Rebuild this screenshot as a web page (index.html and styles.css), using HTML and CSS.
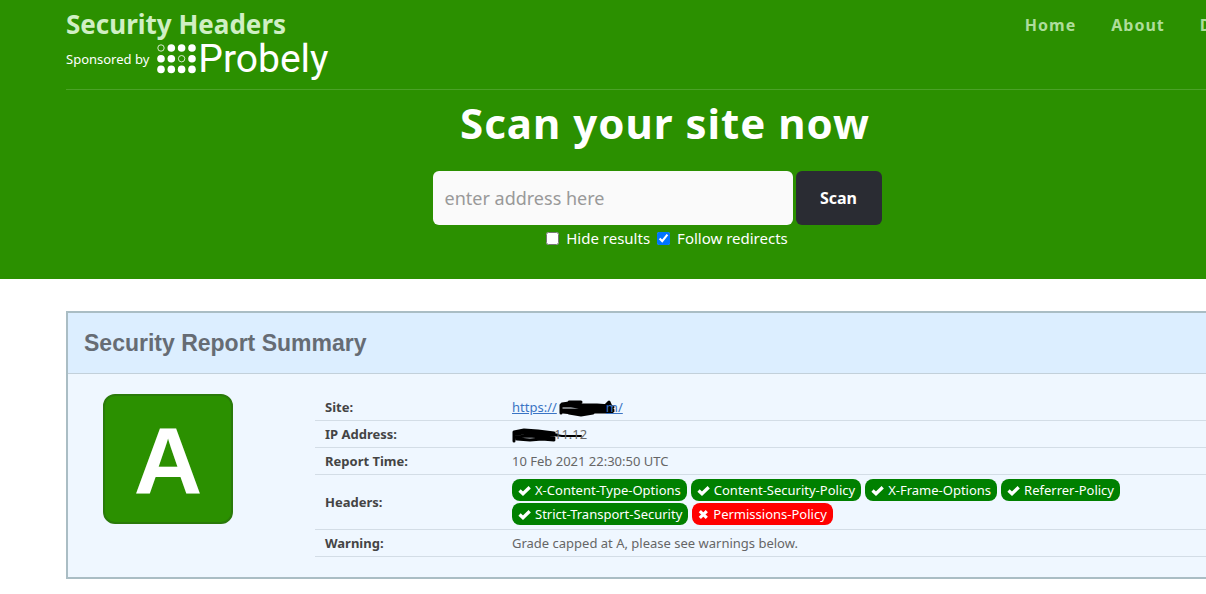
FILE: index.html
```html
<!DOCTYPE html>
<html lang="en">
<head>
<meta charset="UTF-8">
<meta name="viewport" content="width=device-width, initial-scale=1.0">
<title>Scan results - Security Headers</title>
<link rel="stylesheet" href="styles.css">
</head>
<body>
<svg class="sprite" aria-hidden="true">
<symbol id="icon-ok" viewBox="0 0 12 12"><path d="M1.4 6 4.6 9 10.8 3" fill="none" stroke="currentColor" stroke-width="3"/></symbol>
<symbol id="icon-remove" viewBox="0 0 12 12"><path d="M2 2.4 9.6 9.8M9.6 2.4 2 9.8" fill="none" stroke="currentColor" stroke-width="3.4"/></symbol>
</svg>

<header class="hero">
<div class="container">
<div class="topbar">
<div class="brand">
<a class="brand-name" href="#">Security Headers</a>
<div class="sponsor">
<span>Sponsored by</span>
<a class="probely" href="#">
<svg width="39" height="30" viewBox="0 0 39 30" fill="#fff" aria-hidden="true">
<circle cx="4" cy="4" r="3.2" fill="none" stroke="#fff" stroke-width="0.8"/>
<circle cx="14.3" cy="4" r="3.8"/><circle cx="24.6" cy="4" r="3.8"/><circle cx="35" cy="4" r="3.8"/>
<circle cx="4" cy="14.7" r="3.8"/><circle cx="14.3" cy="14.7" r="3.8"/>
<circle cx="24.6" cy="14.7" r="3.2" fill="none" stroke="#fff" stroke-width="0.8"/>
<circle cx="35" cy="14.7" r="3.8"/>
<circle cx="4" cy="25.4" r="3.8"/><circle cx="14.3" cy="25.4" r="3.8"/><circle cx="24.6" cy="25.4" r="3.8"/><circle cx="35" cy="25.4" r="3.8"/>
</svg>
<span>Probely</span>
</a>
</div>
</div>
<nav class="menu">
<a href="#">Home</a>
<a href="#">About</a>
<a href="#">Donate</a>
</nav>
</div>

<h1>Scan your site now</h1>
<form>
<div class="search">
<input type="text" class="address" placeholder="enter address here" aria-label="Address">
<button type="submit" class="scan-btn">Scan</button>
</div>
<div class="options">
<label><input type="checkbox" name="hide"> Hide results</label>
<label><input type="checkbox" name="followRedirects" checked> Follow redirects</label>
</div>
</form>
</div>
</header>

<main class="container">
<section class="report">
<h2>Security Report Summary</h2>
<div class="report-body">
<div class="grade">A</div>
<table class="summary">
<tr>
<th scope="row">Site:</th>
<td><a href="#">https://<svg class="scribble" width="49" height="16" viewBox="0 0 49 16" aria-hidden="true">
<path d="M5 4 12 3 22 5 40 5 54 6M5 6 14 6 30 8 56 7M4 10 14 10 26 10 44 10 56 10M6 12 16 13 26 12 44 12 55 12M12 2 24 2M12 13 24 15 36 13M4 5 4 13M48 6 52 2 56 11"/>
</svg>m/</a></td>
</tr>
<tr>
<th scope="row">IP Address:</th>
<td><svg class="scribble" width="42" height="16" viewBox="0 0 42 16" aria-hidden="true">
<path d="M2 14 2 5 12 3 26 4 42 6M2 7 14 6 30 7 45 8M3 10 16 9 32 10 42 11M5 12 18 13 30 12 42 13"/>
<path class="thin" d="M38 7 50 9 69 9"/>
</svg>11.12</td>
</tr>
<tr>
<th scope="row">Report Time:</th>
<td>10 Feb 2021 22:30:50 UTC</td>
</tr>
<tr>
<th scope="row">Headers:</th>
<td>
<ul class="pills">
<li class="pill"><svg><use href="#icon-ok"/></svg>X-Content-Type-Options</li>
<li class="pill"><svg><use href="#icon-ok"/></svg>Content-Security-Policy</li>
<li class="pill"><svg><use href="#icon-ok"/></svg>X-Frame-Options</li>
<li class="pill"><svg><use href="#icon-ok"/></svg>Referrer-Policy</li>
<li class="pill"><svg><use href="#icon-ok"/></svg>Strict-Transport-Security</li>
<li class="pill pill-red"><svg><use href="#icon-remove"/></svg>Permissions-Policy</li>
</ul>
</td>
</tr>
<tr>
<th scope="row">Warning:</th>
<td>Grade capped at A, please see warnings below.</td>
</tr>
</table>
</div>
</section>
</main>
</body>
</html>
```
FILE: styles.css
```css
* {
box-sizing: border-box;
}

body {
margin: 0;
overflow-x: hidden;
background: #fff;
color: #666;
font-family: "Noto Sans", "Open Sans", sans-serif;
font-size: 13px;
line-height: 20px;
}

.sprite {
display: none;
}

/* runs past the right edge of the window */
.container {
margin: 0 -58px 0 66px;
}

.hero {
background: #2b9000;
color: #fff;
padding: 8px 0 28px;
}

.topbar {
display: flex;
justify-content: space-between;
padding-bottom: 12px;
border-bottom: 1px solid #4ba227;
}

.brand-name {
display: block;
color: #d0efc4;
font-size: 26px;
font-weight: 700;
line-height: 32px;
text-decoration: none;
}

.sponsor {
display: flex;
align-items: center;
gap: 8px;
height: 37px;
}

.probely {
display: flex;
align-items: center;
gap: 2px;
color: #fff;
font-family: Roboto, sans-serif;
font-size: 39px;
line-height: 40px;
text-decoration: none;
}

.menu {
display: flex;
gap: 35px;
padding-top: 4px;
}

.menu a {
color: #aedd9b;
font-size: 16px;
font-weight: 700;
line-height: 26px;
letter-spacing: 1px;
text-decoration: none;
}

h1 {
margin: 6px 0 22px;
font-size: 42px;
line-height: 53px;
letter-spacing: 1px;
text-align: center;
}

.search {
display: flex;
justify-content: center;
gap: 3px;
padding-right: 16px;
}

.address {
width: 360px;
height: 54px;
padding: 0 12px;
border: 0;
border-radius: 6px;
background: #fafafa;
font-family: inherit;
font-size: 18px;
}

.address::placeholder {
color: #999;
}

.scan-btn {
width: 86px;
height: 54px;
border: 0;
border-radius: 6px;
background: #2a2c33;
color: #fff;
font-family: inherit;
font-size: 16px;
font-weight: 700;
}

.options {
display: flex;
justify-content: center;
gap: 7px;
padding: 1px 0 1px 4px;
font-size: 15px;
line-height: 24px;
}

.options label {
display: flex;
align-items: center;
gap: 7px;
}

.options input {
margin: 0;
}

.report {
margin-top: 32px;
border: 2px solid #aabdc4;
background: #eff7ff;
}

h2 {
margin: 0;
padding: 0 16px;
border-bottom: 1px solid #c2d0da;
background: #dceeff;
color: #666c74;
font-family: "Liberation Sans", Arial, sans-serif;
font-size: 23px;
line-height: 60px;
}

.report-body {
display: flex;
gap: 82px;
padding: 20px 16px 20px 35px;
}

.grade {
flex: none;
width: 130px;
height: 130px;
border: 2px solid #2a7a0a;
border-radius: 12px;
background: #2b9000;
color: #fff;
font-family: "Liberation Sans", Arial, sans-serif;
font-size: 95px;
font-weight: 700;
line-height: 130px;
text-align: center;
}

.summary {
flex: 1;
border-collapse: collapse;
}

.summary th,
.summary td {
padding: 3px 10px;
border-bottom: 1px solid #d3dde6;
text-align: left;
}

.summary th {
width: 187px;
color: #444;
}

.summary a {
color: #3a74c4;
}

.scribble {
overflow: visible;
vertical-align: -4px;
fill: none;
stroke: #000;
stroke-width: 3;
stroke-linecap: round;
stroke-linejoin: round;
}

.scribble .thin {
stroke-width: 2;
}

.pills {
display: flex;
flex-wrap: wrap;
gap: 2px 4px;
max-width: 640px;
margin: 0;
padding: 1px 0;
list-style: none;
}

.pill {
display: flex;
align-items: center;
gap: 4px;
height: 22px;
padding: 0 6px;
border-radius: 8px;
background: #008000;
color: #fff;
}

.pill svg {
width: 13px;
height: 13px;
}

.pill-red {
background: #f00;
}

.pill-red svg {
width: 11px;
}
```
